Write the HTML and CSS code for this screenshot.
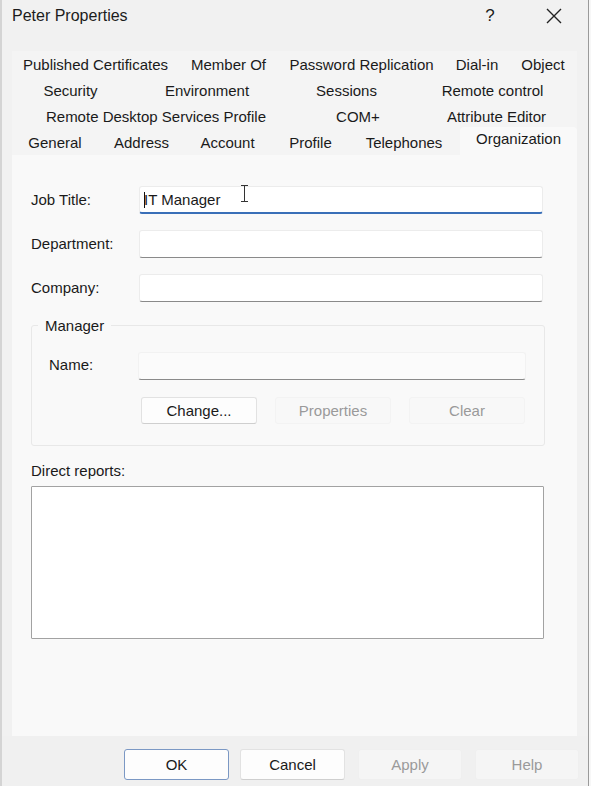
FILE: index.html
```html
<!DOCTYPE html>
<html>
<head>
<meta charset="utf-8">
<link rel="stylesheet" href="styles.css">
</head>
<body>
<div class="dialog">
  <div class="titlebar">
    <span class="title">Peter Properties</span>
    <span class="help">?</span>
    <span class="close"><svg width="16" height="16" viewBox="0 0 16 16"><path d="M1 1 L15 15 M15 1 L1 15" stroke="#222" stroke-width="1.4" fill="none"/></svg></span>
  </div>
  <div class="tabs">
    <div class="tabrow">
      <span class="tab w167">Published Certificates</span>
      <span class="tab w99">Member Of</span>
      <span class="tab w167">Password Replication</span>
      <span class="tab w64">Dial-in</span>
      <span class="tab w68">Object</span>
    </div>
    <div class="tabrow">
      <span class="tab w117">Security</span>
      <span class="tab w156">Environment</span>
      <span class="tab w123">Sessions</span>
      <span class="tab w169">Remote control</span>
    </div>
    <div class="tabrow">
      <span class="tab w288">Remote Desktop Services Profile</span>
      <span class="tab w116">COM+</span>
      <span class="tab w161">Attribute Editor</span>
    </div>
    <div class="tabrow last">
      <span class="tab w86">General</span>
      <span class="tab w87">Address</span>
      <span class="tab w85">Account</span>
      <span class="tab w81">Profile</span>
      <span class="tab w106">Telephones</span>
      <span class="tab selected">Organization</span>
    </div>
  </div>
  <div class="panel">
    <div class="field">
      <span class="label">Job Title:</span>
      <div class="input focused"><span class="caret"></span>IT Manager<span class="ibeam"></span></div>
    </div>
    <div class="field">
      <span class="label">Department:</span>
      <div class="input"></div>
    </div>
    <div class="field">
      <span class="label">Company:</span>
      <div class="input"></div>
    </div>
    <div class="group">
      <span class="legend">Manager</span>
      <div class="namerow">
        <span class="label small">Name:</span>
        <div class="input disabled"></div>
      </div>
      <div class="grpbtns">
        <span class="btn">Change...</span>
        <span class="btn off">Properties</span>
        <span class="btn off">Clear</span>
      </div>
    </div>
    <div class="reports-label">Direct reports:</div>
    <div class="listbox"></div>
  </div>
  <div class="footer">
    <span class="btn big default">OK</span>
    <span class="btn big">Cancel</span>
    <span class="btn big off">Apply</span>
    <span class="btn big off">Help</span>
  </div>
</div>
<div class="edge"></div>
</body>
</html>
```
FILE: styles.css
```css
html, body {
  margin: 0;
  padding: 0;
  width: 591px;
  height: 786px;
  overflow: hidden;
  background: #f0f0f0;
  font-family: "Liberation Sans", Arial, sans-serif;
  color: #1a1a1a;
}
body {
  display: flex;
  position: relative;
}
.dialog {
  width: 588px;
  height: 786px;
  background: #f1f1f1;
  display: flex;
  flex-direction: column;
  border-left: 2px solid #d4d4d4;
  box-sizing: border-box;
}
.edge {
  width: 3px;
  height: 786px;
  border-left: 1px solid #9a9a9a;
  background: #f7f7f7;
  box-sizing: border-box;
}
.titlebar {
  height: 32px;
  display: flex;
  align-items: center;
  padding-left: 10px;
  font-size: 16px;
  color: #1c1c1c;
}
.title { flex: 1; }
.help {
  font-size: 17px;
  width: 20px;
  margin-right: 46px;
  text-align: center;
}
.close {
  width: 16px;
  margin-right: 26px;
  display: flex;
}
.tabs {
  padding-top: 19px;
  padding-left: 10px;
  display: flex;
  flex-direction: column;
}
.tabrow {
  display: flex;
  height: 26px;
  width: 565px;
  font-size: 15px;
  align-items: center;
  background: #f4f4f4;
}
.tabrow.last { height: 26px; position: relative; }
.tab {
  text-align: center;
  white-space: nowrap;
}
.w64 { width: 64px; } .w68 { width: 68px; } .w81 { width: 81px; }
.w85 { width: 85px; } .w86 { width: 86px; } .w87 { width: 87px; }
.w99 { width: 99px; } .w106 { width: 106px; } .w116 { width: 116px; }
.w117 { width: 117px; } .w123 { width: 123px; } .w156 { width: 156px; }
.w161 { width: 161px; } .w167 { width: 167px; } .w169 { width: 169px; }
.w288 { width: 288px; }
.tab.selected {
  margin-left: 3px;
  width: 117px;
  height: 29px;
  align-self: flex-start;
  margin-top: -2px;
  line-height: 24px;
  background: #f9f9f9;
  border-radius: 4px 4px 0 0;
}
.panel {
  margin-left: 10px;
  width: 565px;
  height: 581px;
  background: #f9f9f9;
  box-sizing: border-box;
  padding: 31px 34px 0 19px;
  display: flex;
  flex-direction: column;
}
.field {
  display: flex;
  align-items: center;
  height: 28px;
  margin-bottom: 16px;
  font-size: 15px;
}
.label {
  width: 108px;
  flex: none;
  margin-top: -2px;
}
.input {
  flex: 1;
  height: 28px;
  background: #fff;
  border: 1px solid #ececec;
  border-bottom: 1px solid #8a8a8a;
  border-radius: 3px;
  box-sizing: border-box;
  display: flex;
  align-items: center;
  padding-left: 4px;
  font-size: 15px;
  position: relative;
}
.input.focused {
  border-bottom: 2px solid #3a6fb8;
}
.caret {
  width: 1px;
  height: 16px;
  background: #111;
  margin-right: -1px;
}
.ibeam {
  position: absolute;
  left: 101px;
  top: -2px;
  width: 7px;
  height: 17px;
  border-top: 1px solid #333;
  border-bottom: 1px solid #333;
  box-sizing: border-box;
  background: linear-gradient(#333, #333) center / 1px 100% no-repeat;
}
.group {
  margin-top: 7px;
  margin-right: -2px;
  height: 121px;
  border: 1px solid #e8e8e8;
  border-radius: 3px;
  box-sizing: border-box;
  position: relative;
  padding: 25px 18px 0 17px;
  display: flex;
  flex-direction: column;
}
.legend {
  position: absolute;
  left: 6px;
  top: -9px;
  padding: 0 7px;
  background: #f9f9f9;
  font-size: 15px;
}
.namerow {
  display: flex;
  align-items: center;
  height: 29px;
  font-size: 15px;
}
.label.small { width: 89px; }
.input.disabled {
  background: #fbfbfb;
  border-color: #f2f2f2;
  border-bottom-color: #8a8a8a;
}
.grpbtns {
  display: flex;
  gap: 18px;
  margin-top: 17px;
  padding-left: 92px;
}
.btn {
  width: 116px;
  height: 27px;
  background: #fdfdfd;
  border: 1px solid #e2e2e2;
  border-bottom-color: #cfcfcf;
  border-radius: 3px;
  box-sizing: border-box;
  display: flex;
  align-items: center;
  justify-content: center;
  font-size: 15px;
  color: #1a1a1a;
}
.btn.off {
  background: #f8f8f8;
  border-color: #f3f3f3;
  color: #9a9a9a;
}
.reports-label {
  font-size: 15px;
  margin-top: 16px;
  margin-left: 0;
  height: 17px;
}
.listbox {
  margin-top: 7px;
  margin-right: -1px;
  height: 151px;
  background: #fff;
  border: 1px solid #a2a2a2;
  border-radius: 1px;
}
.footer {
  flex: 1;
  display: flex;
  align-items: flex-start;
  padding-top: 13px;
  padding-left: 122px;
  gap: 11px;
  background: #f0f0f0;
}
.btn.big {
  width: 105px;
  height: 31px;
  font-size: 15px;
}
.btn.default {
  border: 1px solid #7b98c4;
}
.btn.big.off {
  width: 104px;
  margin-left: 2px;
  background: #f5f5f5;
  border-color: #efefef;
}
```
